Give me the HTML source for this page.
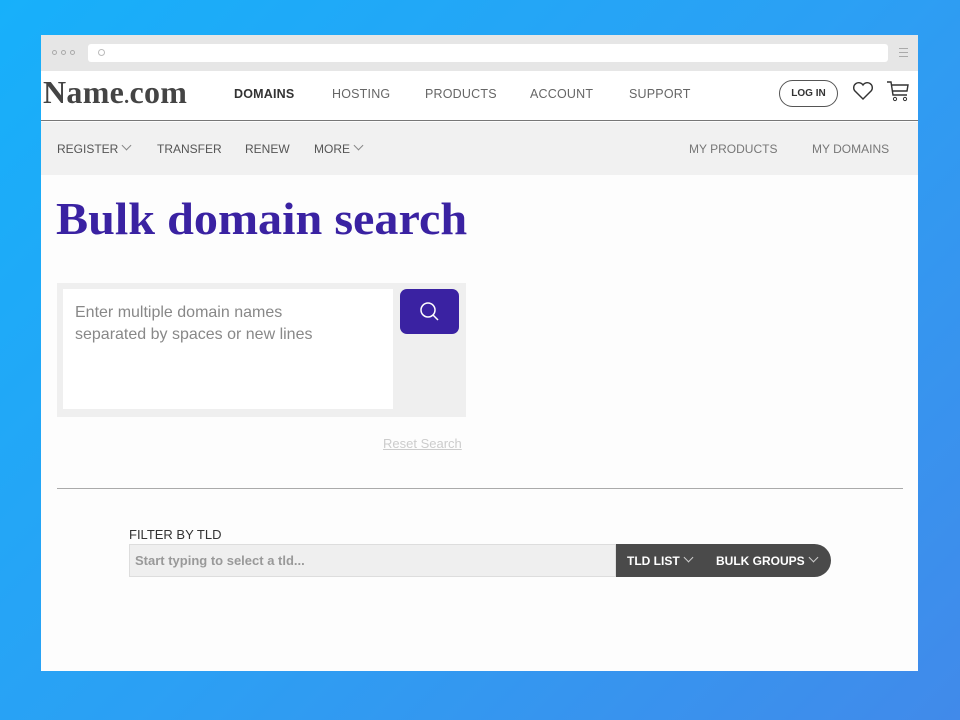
<!DOCTYPE html>
<html><head><meta charset="utf-8"><style>
*{margin:0;padding:0;box-sizing:border-box}
body{width:960px;height:720px;overflow:hidden;background:linear-gradient(135deg,#17b0fa 0%,#2ba0f4 50%,#418aea 100%);font-family:"Liberation Sans",sans-serif;position:relative}
.win{position:absolute;left:41px;top:35px;width:877px;height:636px;background:#fdfdfd;overflow:hidden}
.bar{position:absolute;left:0;top:0;width:877px;height:36px;background:#e6e6e6}
.dot{position:absolute;top:15px;width:5px;height:5px;border-radius:50%;border:1px solid #aaa}
.addr{position:absolute;left:47px;top:9px;width:800px;height:18px;background:#fff;border-radius:3px}
.hdr{position:absolute;left:0;top:36px;width:877px;height:50px;background:#fff;border-bottom:1px solid #777}
.logo{position:absolute;left:2px;top:3px;font-family:"Liberation Serif",serif;font-weight:bold;font-size:32px;color:#444;letter-spacing:0.3px}
.nav{position:absolute;top:16px;font-size:12.5px;color:#666;letter-spacing:.2px}
.sub{position:absolute;left:0;top:87px;width:877px;height:53px;background:#f1f1f1}
.sn{position:absolute;top:20px;font-size:12px;color:#555;white-space:nowrap}
.chev{display:inline-block;width:7px;height:7px;border-right:1px solid #888;border-bottom:1px solid #888;transform:rotate(45deg);margin-left:5px;vertical-align:4px}
h1{position:absolute;left:15px;top:158px;font-family:"Liberation Serif",serif;font-weight:bold;font-size:45px;color:#3a22a2;letter-spacing:0;transform:scaleX(1.07);transform-origin:left;white-space:nowrap}
.box{position:absolute;left:16px;top:248px;width:409px;height:134px;background:#efefef}
.ta{position:absolute;left:6px;top:6px;width:330px;height:120px;background:#fff;padding:13px 12px;font-size:16px;line-height:22px;color:#888}
.btn{position:absolute;left:343px;top:6px;width:59px;height:45px;background:#3a22a2;border-radius:7px}
.reset{position:absolute;left:342px;top:401px;font-size:13px;color:#ccc;text-decoration:underline}
.hr{position:absolute;left:16px;top:453px;width:846px;height:1px;background:#aaa}
.fl{position:absolute;left:88px;top:492px;font-size:13px;color:#333}
.inp{position:absolute;left:88px;top:509px;width:487px;height:33px;background:#efefef;border:1px solid #ddd;font-size:13px;color:#999;padding:8px 5px;font-weight:bold}
.dk{position:absolute;left:575px;top:509px;width:215px;height:33px;background:#4a4a4a;border-radius:0 17px 17px 0;color:#fff;font-size:12px;font-weight:bold}
.dk span.t{position:absolute;top:10px;white-space:nowrap}
.dk .chev{border-color:#ccc}
</style></head><body>
<div class="win">
<div class="bar"><div class="dot" style="left:11px"></div><div class="dot" style="left:20px"></div><div class="dot" style="left:29px"></div>
<div class="addr"><div style="position:absolute;left:10px;top:5px;width:7px;height:7px;border:1px solid #bbb;border-radius:50%"></div></div>
<div style="position:absolute;left:858px;top:13px;width:9px;height:9px;border-top:1px solid #aaa;border-bottom:1px solid #aaa"><div style="margin-top:3px;height:1px;background:#aaa"></div></div></div>
<div class="hdr">
<div class="logo">Name<span style="font-size:20px">.</span>com</div>
<div class="nav" style="left:193px;color:#333;font-weight:bold">DOMAINS</div>
<div class="nav" style="left:291px">HOSTING</div>
<div class="nav" style="left:384px">PRODUCTS</div>
<div class="nav" style="left:489px">ACCOUNT</div>
<div class="nav" style="left:588px">SUPPORT</div>
<div style="position:absolute;left:738px;top:9px;width:59px;height:27px;border:1px solid #555;border-radius:14px;font-size:10px;font-weight:bold;color:#333;text-align:center;line-height:25px">LOG IN</div>
<svg style="position:absolute;left:811px;top:10px" width="22" height="20" viewBox="0 0 22 20"><path d="M11 18 L2.5 9.5 A5 5 0 0 1 11 4 A5 5 0 0 1 19.5 9.5 Z" fill="none" stroke="#333" stroke-width="1.4"/></svg>
<svg style="position:absolute;left:845px;top:8px" width="24" height="24" viewBox="0 0 24 24"><path d="M1 3 H5 L7 16 H21 M6 6 H22 L21 12 H7" fill="none" stroke="#333" stroke-width="1.4"/><circle cx="9" cy="20" r="1.6" fill="none" stroke="#333"/><circle cx="19" cy="20" r="1.6" fill="none" stroke="#333"/></svg>
</div>
<div class="sub">
<div class="sn" style="left:16px">REGISTER<span class="chev"></span></div>
<div class="sn" style="left:116px">TRANSFER</div>
<div class="sn" style="left:204px">RENEW</div>
<div class="sn" style="left:273px">MORE<span class="chev"></span></div>
<div class="sn" style="left:648px;color:#777">MY PRODUCTS</div>
<div class="sn" style="left:771px;color:#777">MY DOMAINS</div>
</div>
<h1>Bulk domain search</h1>
<div class="box"><div class="ta">Enter multiple domain names<br>separated by spaces or new lines</div>
<div class="btn"><svg width="59" height="45" viewBox="0 0 59 45"><circle cx="28" cy="21" r="7" fill="none" stroke="#fff" stroke-width="1.5"/><path d="M33 26 L38 31" stroke="#fff" stroke-width="1.5"/></svg></div></div>
<div class="reset">Reset Search</div>
<div class="hr"></div>
<div class="fl">FILTER BY TLD</div>
<div class="inp">Start typing to select a tld...</div>
<div class="dk"><span class="t" style="left:11px">TLD LIST<span class="chev"></span></span><span class="t" style="left:100px">BULK GROUPS<span class="chev"></span></span></div>
</div>
</body></html>
